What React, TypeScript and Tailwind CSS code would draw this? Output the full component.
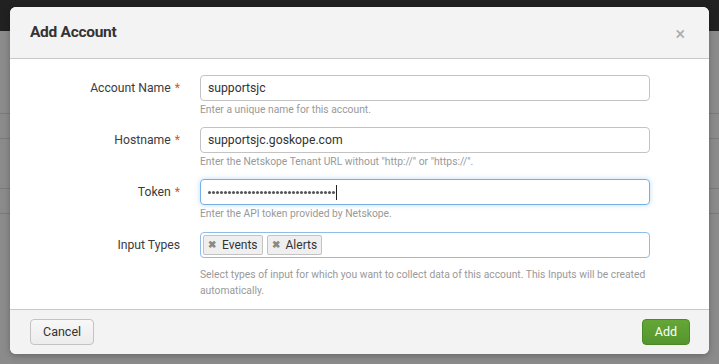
import React from "react";

const Label = ({ text, req }: { text: string; req?: boolean }) => (
  <div className="w-[190px] pr-[20px] text-right text-[12.2px] text-[#3c3c3c] leading-[26px] shrink-0">
    {text}
    {req && <span className="text-[#d6563c] ml-[4px]">*</span>}
  </div>
);

const Help = ({ children }: { children: React.ReactNode }) => (
  <div className="text-[10.3px] leading-[16px] text-[#999] mt-[1px] pr-[40px]">{children}</div>
);

const Tag = ({ text }: { text: string }) => (
  <div className="flex items-center h-[20px] px-[4px] border border-[#c3c3c3] rounded-[2px] bg-[#efefef] text-[12px] text-[#333]">
    <span className="text-[#888] text-[10px] mr-[6px] leading-none font-bold">✖</span>
    {text}
  </div>
);

export default function App() {
  return (
    <div className="relative w-[719px] h-[364px] overflow-hidden bg-[#8b8b8b]" style={{ fontFamily: "Roboto, 'Liberation Sans', sans-serif" }}>
      <div className="h-[31px] bg-[#212121]" />
      <div className="flex flex-col">
        <div className="h-[83px] border-b border-[#7a7a7a]" />
        <div className="h-[25px] border-b border-[#7a7a7a]" />
        <div className="h-[50px] border-b border-[#7a7a7a]" />
        <div className="h-[25px] border-b border-[#7a7a7a]" />
      </div>
      <div className="absolute left-[10px] top-[7px] w-[699px] h-[347px] rounded-[6px] bg-white flex flex-col overflow-hidden shadow-[0_2px_6px_rgba(0,0,0,0.25)]">
        <div className="h-[52px] bg-[#f3f3f3] border-b border-[#c8c8c8] flex items-center justify-between pl-[20px] pr-[24px] shrink-0">
          <div className="text-[15.5px] font-bold text-[#333] tracking-[-0.3px] mt-[1px]">Add Account</div>
          <div className="text-[#aaa] text-[18px] leading-none mt-[3px]">×</div>
        </div>
        <div className="flex-1 flex flex-col pt-[16px]">
          <div className="flex mb-[9px]">
            <Label text="Account Name" req />
            <div className="flex-1 pr-[59px]">
              <div className="h-[26px] border border-[#c3c3c3] rounded-[4px] flex items-center px-[7px] text-[12.2px] text-[#333]">supportsjc</div>
              <Help>Enter a unique name for this account.</Help>
            </div>
          </div>
          <div className="flex mb-[9px]">
            <Label text="Hostname" req />
            <div className="flex-1 pr-[59px]">
              <div className="h-[26px] border border-[#c3c3c3] rounded-[4px] flex items-center px-[7px] text-[12.2px] text-[#333]">supportsjc.goskope.com</div>
              <Help>Enter the Netskope Tenant URL without "http://" or "https://".</Help>
            </div>
          </div>
          <div className="flex mb-[10px]">
            <Label text="Token" req />
            <div className="flex-1 pr-[59px]">
              <div className="h-[26px] border border-[#74b0e4] rounded-[4px] flex items-center px-[7px] text-[#333] shadow-[0_0_5px_rgba(108,176,232,0.45)]">
                <div className="flex items-center gap-[1px]">
                  {Array.from({ length: 32 }).map((_, i) => (
                    <span key={i} className="block w-[3px] h-[3px] rounded-full bg-[#555]" />
                  ))}
                </div>
                <span className="inline-block w-[1px] h-[15px] bg-[#222] ml-[1px]" />
              </div>
              <Help>Enter the API token provided by Netskope.</Help>
            </div>
          </div>
          <div className="flex">
            <Label text="Input Types" />
            <div className="flex-1 pr-[59px]">
              <div className="h-[26px] border border-[#8ebde8] rounded-[4px] flex items-center gap-[4px] px-[2px]">
                <Tag text="Events" />
                <Tag text="Alerts" />
              </div>
              <div className="text-[10.3px] leading-[16px] text-[#999] mt-[9px] pr-[4px]">
                Select types of input for which you want to collect data of this account. This Inputs will be created automatically.
              </div>
            </div>
          </div>
        </div>
        <div className="h-[45px] bg-[#f3f3f3] border-t border-[#c8c8c8] flex items-center justify-between pl-[20px] pr-[19px] shrink-0">
          <button className="h-[26px] px-[12px] border border-[#c3c3c3] rounded-[4px] bg-gradient-to-b from-[#f8f8f8] to-[#ececec] text-[12.5px] text-[#333]">Cancel</button>
          <button className="h-[26px] px-[12px] border border-[#4a8a25] rounded-[4px] bg-gradient-to-b from-[#65a637] to-[#559530] text-[12.5px] text-white">Add</button>
        </div>
      </div>
    </div>
  );
}
